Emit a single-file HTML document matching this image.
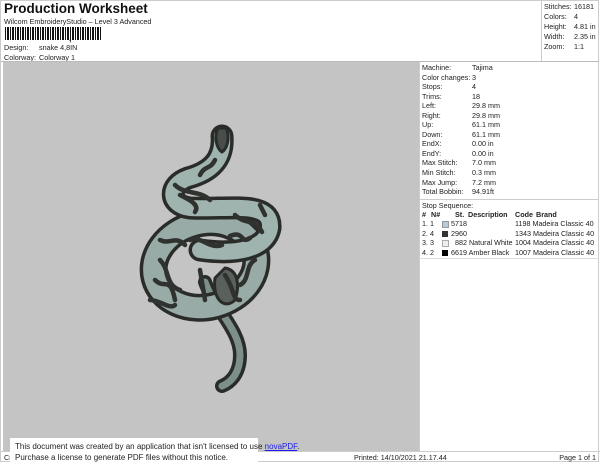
<!DOCTYPE html>
<html><head><style>
body{margin:0;width:600px;height:464px;background:#fff;font-family:"Liberation Sans",sans-serif;position:relative;overflow:hidden;color:#222}
.a{position:absolute;white-space:nowrap}
.s{font-size:7.2px}
</style></head><body>
<div class="a" style="left:0;top:0;width:599px;height:462px;border:1px solid #ccc;box-sizing:border-box"></div>
<div class="a" style="left:4px;top:1px;font-size:13.5px;font-weight:bold;color:#111">Production Worksheet</div>
<div class="a s" style="left:4px;top:17px">Wilcom EmbroideryStudio – Level 3 Advanced</div>
<div class="a" style="left:5px;top:27px;height:13px;width:96px;background:repeating-linear-gradient(90deg,#111 0 1px,#fff 1px 2px,#111 2px 3px,#111 3px 4px,#fff 4px 5px)"></div>
<div class="a" style="left:69px;top:33px;font-size:9px;font-weight:bold">,</div>
<div class="a s" style="left:4px;top:43px">Design:</div><div class="a s" style="left:39px;top:43px">snake 4,8IN</div>
<div class="a s" style="left:4px;top:53px">Colorway:</div><div class="a s" style="left:39px;top:53px">Colorway 1</div>
<div class="a" style="left:541px;top:0;width:1px;height:61px;background:#ccc"></div>
<div class="a s" style="left:544px;top:2px;line-height:10px">Stitches:<br>Colors:<br>Height:<br>Width:<br>Zoom:</div>
<div class="a s" style="left:574px;top:2px;line-height:10px">16181<br>4<br>4.81 in<br>2.35 in<br>1:1</div>
<div class="a" style="left:1px;top:61px;width:598px;height:1px;background:#bbb"></div>
<div class="a" style="left:3px;top:62px;width:416px;height:389px;background:#c4c4c4"></div>
<div class="a" style="left:419px;top:62px;width:1px;height:389px;background:#ccc"></div>
<div class="a s" style="left:422px;top:63px;line-height:9.55px">Machine:<br>Color changes:<br>Stops:<br>Trims:<br>Left:<br>Right:<br>Up:<br>Down:<br>EndX:<br>EndY:<br>Max Stitch:<br>Min Stitch:<br>Max Jump:<br>Total Bobbin:</div>
<div class="a s" style="left:472px;top:63px;line-height:9.55px">Tajima<br>3<br>4<br>18<br>29.8 mm<br>29.8 mm<br>61.1 mm<br>61.1 mm<br>0.00 in<br>0.00 in<br>7.0 mm<br>0.3 mm<br>7.2 mm<br>94.91ft</div>
<div class="a" style="left:419px;top:199px;width:180px;height:1px;background:#ccc"></div>
<div class="a s" style="left:422px;top:201px">Stop Sequence:</div>
<div class="a s" style="left:421px;top:210px;line-height:10px;font-weight:bold;text-decoration:underline">
<span style="position:absolute;left:1px">#</span><span style="position:absolute;left:10px">N#</span><span style="position:absolute;left:34px">St.</span><span style="position:absolute;left:47px">Description</span><span style="position:absolute;left:94px">Code</span><span style="position:absolute;left:115px">Brand</span>
</div>
<div class="a s" style="left:421px;top:219px;line-height:9.6px;width:178px">
<div style="position:relative;height:9.6px"><span style="position:absolute;left:1px">1. 1</span><span style="position:absolute;left:21px;top:2px;width:5px;height:5px;background:#b8c8d6;border:1px solid #999"></span><span style="position:absolute;left:30px">5718</span><span style="position:absolute;left:94px">1198 Madeira Classic 40</span></div>
<div style="position:relative;height:9.6px"><span style="position:absolute;left:1px">2. 4</span><span style="position:absolute;left:21px;top:2px;width:6px;height:6px;background:#333"></span><span style="position:absolute;left:30px">2960</span><span style="position:absolute;left:94px">1343 Madeira Classic 40</span></div>
<div style="position:relative;height:9.6px"><span style="position:absolute;left:1px">3. 3</span><span style="position:absolute;left:21px;top:2px;width:5px;height:5px;background:#eee;border:1px solid #aaa"></span><span style="position:absolute;left:34px">882 Natural White</span><span style="position:absolute;left:94px">1004 Madeira Classic 40</span></div>
<div style="position:relative;height:9.6px"><span style="position:absolute;left:1px">4. 2</span><span style="position:absolute;left:21px;top:2px;width:6px;height:6px;background:#000"></span><span style="position:absolute;left:30px">6619 Amber Black</span><span style="position:absolute;left:94px">1007 Madeira Classic 40</span></div>
</div>
<div class="a" style="left:419px;top:258px;width:180px;height:1px;background:#ddd"></div>
<svg class="a" style="left:0;top:0" width="600" height="464">
<g fill="none" stroke-linecap="round" stroke-linejoin="round">
<path d="M205,282 C215,310 240,330 240,355 C240,372 232,382 222,386" stroke="#2a2c2a" stroke-width="14"/>
<path d="M205,282 C215,310 240,330 240,355 C240,372 232,382 222,386" stroke="#7d8f8b" stroke-width="7"/>
<ellipse cx="205" cy="265" rx="52" ry="42" stroke="#2a2c2a" stroke-width="28" transform="rotate(-15 205 265)"/>
<ellipse cx="205" cy="265" rx="52" ry="42" stroke="#98aba7" stroke-width="21" transform="rotate(-15 205 265)"/>
<path d="M215,278 C212,300 225,310 235,300 C240,285 238,270 225,268 Z" fill="#5a605c" stroke="#2a2c2a" stroke-width="3"/>
<path d="M222,136 C224,160 210,172 188,178 C168,185 168,205 190,208 C230,210 272,200 270,228 C266,250 235,255 200,250" stroke="#2a2c2a" stroke-width="23"/>
<path d="M222,136 C224,160 210,172 188,178 C168,185 168,205 190,208 C230,210 272,200 270,228 C266,250 235,255 200,250" stroke="#9fb3af" stroke-width="16"/>
<path d="M190,240 C200,235 210,250 222,245 M235,215 C245,225 255,218 262,232 M160,260 C170,270 165,285 180,290 M175,185 C185,195 200,190 210,200 M200,270 L205,300 M225,275 C235,290 232,300 240,300 M155,280 C165,290 170,275 175,300 M250,238 C240,245 245,230 230,236 M180,195 C190,200 200,205 195,212 M160,240 C170,245 175,235 185,245 M150,300 C160,300 170,310 175,305 M255,260 C245,265 250,280 240,285 M215,160 C210,170 205,165 200,175 M260,205 L265,215" stroke="#2f322f" stroke-width="4.5"/>
<path d="M218,128 C214,136 216,148 222,152 C228,148 230,136 226,128 Z" fill="#4a4e4b" stroke="#2a2c2a" stroke-width="3"/>
</g></svg>
<div class="a" style="left:0;top:451px;width:600px;height:1px;background:#ccc"></div>
<div class="a s" style="left:4px;top:453px">Cr</div>
<div class="a s" style="left:354px;top:453px">Printed: 14/10/2021 21.17.44</div>
<div class="a s" style="right:4px;top:453px">Page 1 of 1</div>
<div class="a" style="left:10px;top:438px;width:248px;height:26px;background:#fff"></div>
<div class="a s" style="left:15px;top:441px;line-height:11px;font-size:8px">This document was created by an application that isn't licensed to use <span style="color:#1a1aee;text-decoration:underline">novaPDF</span>.<br>Purchase a license to generate PDF files without this notice.</div>
</body></html>
